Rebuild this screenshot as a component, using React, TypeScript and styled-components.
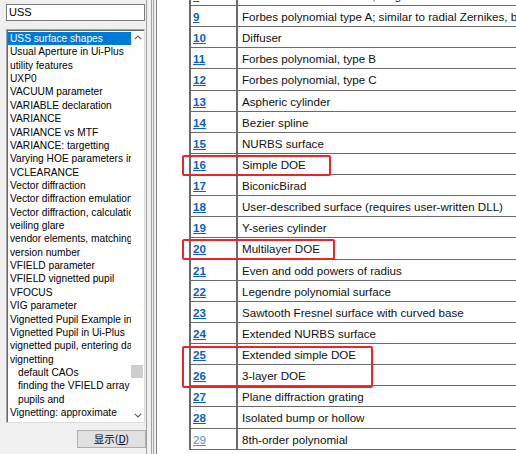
import React from 'react';
import styled, { createGlobalStyle } from 'styled-components';

const GlobalStyle = createGlobalStyle`
  html, body { margin: 0; padding: 0; width: 516px; height: 454px; overflow: hidden; background: #ffffff; }
  #root { width: 516px; height: 454px; }
  * { box-sizing: border-box; }
`;

const Page = styled.div`
  display: flex;
  width: 516px;
  height: 454px;
  overflow: hidden;
`;

const LeftPane = styled.div`
  width: 146px;
  flex: none;
  background: #f0f0f0;
  display: flex;
  flex-direction: column;
  padding: 4px 1px 0 6px;
  font-family: "Liberation Sans", Arial, sans-serif;
`;

const SearchInput = styled.div`
  height: 17px;
  background: #ffffff;
  border: 1px solid #7a7a7a;
  font-size: 11px;
  line-height: 15px;
  padding-left: 2px;
  color: #000;
`;

const ListBox = styled.div`
  margin-top: 8px;
  height: 394px;
  background: #ffffff;
  border-top: 1px solid #a0a0a0;
  border-left: 1px solid #a0a0a0;
  border-right: 1px solid #dcdcdc;
  border-bottom: 1px solid #dcdcdc;
  box-shadow: inset 1px 1px 0 #696969;
  display: flex;
  padding: 1px 0 0 1px;
`;

const Items = styled.div`
  flex: 1;
  min-width: 0;
  overflow: hidden;
  padding-top: 1px;
`;

const Item = styled.div<{ $selected?: boolean; $indent?: boolean }>`
  height: 13.37px;
  line-height: 13.37px;
  font-size: 10.2px;
  white-space: nowrap;
  overflow: hidden;
  padding-left: ${(p) => (p.$indent ? '10px' : '2px')};
  color: ${(p) => (p.$selected ? '#ffffff' : '#000000')};
  background: ${(p) => (p.$selected ? '#0078d7' : 'transparent')};
`;

const ScrollBar = styled.div`
  width: 13px;
  flex: none;
  position: relative;
  display: flex;
  flex-direction: column;
  justify-content: space-between;
  background: #ffffff;
`;

const ArrowBox = styled.div`
  height: 13px;
  display: flex;
  align-items: center;
  justify-content: center;
`;

const Thumb = styled.div`
  position: absolute;
  left: 0;
  width: 12px;
  height: 13px;
  background: #cdcdcd;
`;

const ButtonRow = styled.div`
  margin-top: 7px;
  display: flex;
  justify-content: flex-end;
`;

const PushButton = styled.div`
  width: 69px;
  height: 18px;
  margin-right: -1px;
  background: #e1e1e1;
  border: 1px solid #adadad;
  font-family: "Noto Sans CJK SC", "Liberation Sans", sans-serif;
  font-size: 10.5px;
  line-height: 16px;
  text-align: center;
  color: #000;
  u { text-decoration: underline; }
`;

const Splitter = styled.div`
  width: 11px;
  flex: none;
  background: linear-gradient(
    to right,
    #a0a0a0 0 1px,
    #f0f0f0 1px 5px,
    #a0a0a0 5px 6px,
    #f0f0f0 6px 7px,
    #a0a0a0 7px 8px,
    #f0f0f0 8px 10px,
    #828282 10px 11px
  );
`;

const RightPane = styled.div`
  flex: 1;
  position: relative;
  background: #ffffff;
  overflow: hidden;
  padding-left: 32px;
  font-family: "Liberation Sans", Arial, sans-serif;
`;

const Table = styled.div`
  margin-top: -15.14px;
  border-left: 2px solid #6a6a6a;
  width: 400px;
`;

const Row = styled.div`
  display: flex;
  height: 21.14px;
  border-bottom: 1px solid #6a6a6a;
  align-items: stretch;
`;

const NumCell = styled.div`
  width: 47px;
  flex: none;
  border-right: 2px solid #6a6a6a;
  display: flex;
  align-items: center;
  padding-left: 2px;
  padding-top: 1px;
`;

const NumLink = styled.a<{ $light?: boolean }>`
  font-size: 11.6px;
  font-weight: ${(p) => (p.$light ? 400 : 700)};
  color: ${(p) => (p.$light ? '#4a90d9' : '#0b5fc4')};
  text-decoration: underline;
  text-underline-offset: 1px;
`;

const TextCell = styled.div`
  flex: 1;
  min-width: 0;
  display: flex;
  align-items: center;
  padding-left: 4px;
  padding-top: 1px;
  font-size: 11.6px;
  color: #111;
  white-space: nowrap;
  overflow: hidden;
`;

const Highlight = styled.div`
  position: absolute;
  border: 2px solid #e8262a;
  border-radius: 2px;
  pointer-events: none;
`;

const listItems: { text: string; indent?: boolean; selected?: boolean }[] = [
  { text: 'USS surface shapes', selected: true },
  { text: 'Usual Aperture in Ui-Plus' },
  { text: 'utility features' },
  { text: 'UXP0' },
  { text: 'VACUUM parameter' },
  { text: 'VARIABLE declaration' },
  { text: 'VARIANCE' },
  { text: 'VARIANCE vs MTF' },
  { text: 'VARIANCE: targetting' },
  { text: 'Varying HOE parameters in' },
  { text: 'VCLEARANCE' },
  { text: 'Vector diffraction' },
  { text: 'Vector diffraction emulation' },
  { text: 'Vector diffraction, calculation' },
  { text: 'veiling glare' },
  { text: 'vendor elements, matching' },
  { text: 'version number' },
  { text: 'VFIELD parameter' },
  { text: 'VFIELD vignetted pupil' },
  { text: 'VFOCUS' },
  { text: 'VIG parameter' },
  { text: 'Vignetted Pupil Example in' },
  { text: 'Vignetted Pupil in Ui-Plus' },
  { text: 'vignetted pupil, entering data' },
  { text: 'vignetting' },
  { text: 'default CAOs', indent: true },
  { text: 'finding the VFIELD array', indent: true },
  { text: 'pupils and', indent: true },
  { text: 'Vignetting: approximate' },
];

const rows: { n: number; text: string; light?: boolean }[] = [
  { n: 8, text: 'Standard Zernike surface, fringe' },
  { n: 9, text: 'Forbes polynomial type A; similar to radial Zernikes, but orthogonal in slope' },
  { n: 10, text: 'Diffuser' },
  { n: 11, text: 'Forbes polynomial, type B' },
  { n: 12, text: 'Forbes polynomial, type C' },
  { n: 13, text: 'Aspheric cylinder' },
  { n: 14, text: 'Bezier spline' },
  { n: 15, text: 'NURBS surface' },
  { n: 16, text: 'Simple DOE' },
  { n: 17, text: 'BiconicBirad' },
  { n: 18, text: 'User-described surface (requires user-written DLL)' },
  { n: 19, text: 'Y-series cylinder' },
  { n: 20, text: 'Multilayer DOE' },
  { n: 21, text: 'Even and odd powers of radius' },
  { n: 22, text: 'Legendre polynomial surface' },
  { n: 23, text: 'Sawtooth Fresnel surface with curved base' },
  { n: 24, text: 'Extended NURBS surface' },
  { n: 25, text: 'Extended simple DOE' },
  { n: 26, text: '3-layer DOE' },
  { n: 27, text: 'Plane diffraction grating' },
  { n: 28, text: 'Isolated bump or hollow' },
  { n: 29, text: '8th-order polynomial', light: true },
];

const boxes = [
  { left: 25, top: 155, width: 149, height: 21 },
  { left: 25, top: 239, width: 153, height: 21 },
  { left: 25, top: 346, width: 191, height: 42 },
];

const Chevron = ({ up }: { up?: boolean }) => (
  <svg width="8" height="5" viewBox="0 0 8 5">
    <path
      d={up ? 'M0.8 4.2 L4 1 L7.2 4.2' : 'M0.8 0.8 L4 4 L7.2 0.8'}
      fill="none"
      stroke="#606060"
      strokeWidth="1.2"
    />
  </svg>
);

export default function App() {
  return (
    <Page>
      <GlobalStyle />
      <LeftPane>
        <SearchInput>USS</SearchInput>
        <ListBox>
          <Items>
            {listItems.map((it, i) => (
              <Item key={i} $selected={it.selected} $indent={it.indent}>
                {it.text}
              </Item>
            ))}
          </Items>
          <ScrollBar>
            <ArrowBox>
              <Chevron up />
            </ArrowBox>
            <Thumb style={{ top: 334 }} />
            <ArrowBox>
              <Chevron />
            </ArrowBox>
          </ScrollBar>
        </ListBox>
        <ButtonRow>
          <PushButton>
            显示(<u>D</u>)
          </PushButton>
        </ButtonRow>
      </LeftPane>
      <Splitter />
      <RightPane>
        <Table>
          {rows.map((r) => (
            <Row key={r.n}>
              <NumCell>
                <NumLink $light={r.light}>{r.n}</NumLink>
              </NumCell>
              <TextCell>{r.text}</TextCell>
            </Row>
          ))}
        </Table>
        {boxes.map((b, i) => (
          <Highlight key={i} style={{ left: b.left, top: b.top, width: b.width, height: b.height }} />
        ))}
      </RightPane>
    </Page>
  );
}
